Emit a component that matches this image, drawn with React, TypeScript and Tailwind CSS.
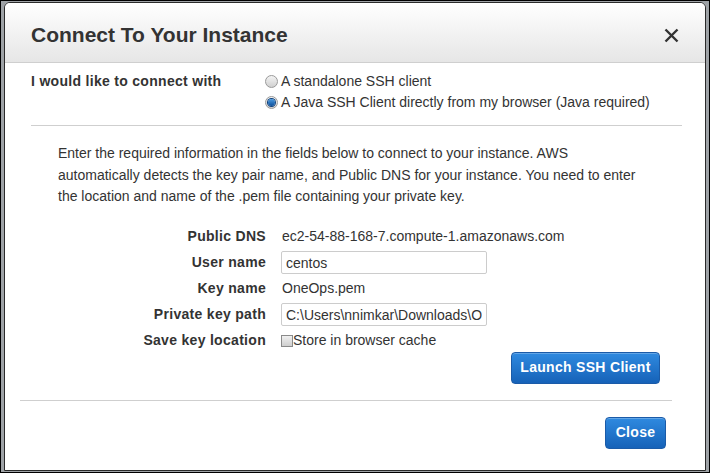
import React from 'react';

const font = { fontFamily: '"Liberation Sans", Arial, sans-serif' };

function Radio({ checked }: { checked?: boolean }) {
  return (
    <span className="relative inline-flex h-[13px] w-[13px] shrink-0 items-center justify-center rounded-full border border-[#9a9a9a] bg-gradient-to-b from-[#f4f4f4] to-[#d0d0d0]">
      {checked && <span className="h-[7px] w-[7px] rounded-full bg-gradient-to-b from-[#4a9be0] to-[#0a4f9c] ring-1 ring-[#0d3f7a]" />}
    </span>
  );
}

function Row({ label, children }: { label: string; children: React.ReactNode }) {
  return (
    <div className="flex h-[26px] items-center">
      <div className="w-[235px] shrink-0 text-right text-[14px] font-bold tracking-[0.3px] text-[#333]">{label}</div>
      <div className="ml-[16px] flex items-center text-[14px] text-[#333]">{children}</div>
    </div>
  );
}

function BlueButton({ children, className }: { children: React.ReactNode; className?: string }) {
  return (
    <button
      className={`h-[32px] rounded-[4px] border border-[#1b5ba8] bg-gradient-to-b from-[#2f8ae0] to-[#1662b8] text-[14px] font-bold tracking-[0.3px] text-white shadow-[inset_0_1px_0_rgba(255,255,255,0.25)] ${className ?? ''}`}
    >
      {children}
    </button>
  );
}

export default function App() {
  return (
    <div style={font} className="flex h-[473px] w-[710px] border border-black bg-[#9ea2a6] px-[3px] pt-[1px] pb-[1px]">
      <div className="flex flex-1 flex-col overflow-hidden rounded-t-[6px] border border-[#2a2a2a] bg-white">
        {/* header */}
        <div className="flex h-[60px] shrink-0 items-center justify-between border-b border-[#cfcfcf] bg-gradient-to-b from-white to-[#e6e6e6] pl-[26px] pr-[26px] pt-[4px]">
          <h2 className="text-[21px] font-bold text-[#333]">Connect To Your Instance</h2>
          <svg width="15" height="15" viewBox="0 0 15 15" className="mt-[2px]">
            <path d="M1.5 1.5 L13.5 13.5 M13.5 1.5 L1.5 13.5" stroke="#333" strokeWidth="2.4" />
          </svg>
        </div>

        {/* connect choice */}
        <div className="ml-[26px] mr-[23px] mt-[8px] flex">
          <div className="w-[234px] shrink-0 text-[14px] font-bold leading-[21px] tracking-[0.3px] text-[#333]">I would like to connect with</div>
          <div className="flex flex-col text-[14px] leading-[21px] text-[#333]">
            <label className="flex items-center gap-[3px]"><Radio /> A standalone SSH client</label>
            <label className="flex items-center gap-[3px]"><Radio checked /> A Java SSH Client directly from my browser (Java required)</label>
          </div>
        </div>
        <div className="ml-[26px] mr-[23px] mt-[12px] border-t border-[#cfcfcf]" />

        <p className="ml-[53px] mt-[17px] w-[588px] text-[14px] leading-[21.5px] text-[#333]">
          Enter the required information in the fields below to connect to your instance. AWS automatically detects the key pair name, and Public DNS for your instance. You need to enter the location and name of the .pem file containing your private key.
        </p>

        <div className="ml-[26px] mt-[16px] flex flex-col">
          <Row label="Public DNS">ec2-54-88-168-7.compute-1.amazonaws.com</Row>
          <Row label="User name">
            <input
              readOnly
              value="centos"
              className="-ml-px h-[23px] w-[206px] rounded-[2px] border border-[#cccccc] px-[4px] text-[14px] text-[#333] outline-none"
            />
          </Row>
          <Row label="Key name">OneOps.pem</Row>
          <Row label="Private key path">
            <input
              readOnly
              value="C:\Users\nnimkar\Downloads\OneOps.pem"
              className="-ml-px h-[23px] w-[206px] rounded-[2px] border border-[#cccccc] px-[4px] text-[14px] text-[#333] outline-none"
            />
          </Row>
          <Row label="Save key location">
            <span className="-ml-px flex items-center">
              <span className="h-[12px] w-[12px] border border-[#8a8a8a] bg-gradient-to-b from-[#f0f0f0] to-[#cfcfcf]" />
              Store in browser cache
            </span>
          </Row>
        </div>

        <div className="mr-[45px] mt-[-2px] flex justify-end">
          <BlueButton className="w-[149px]">Launch SSH Client</BlueButton>
        </div>

        <div className="ml-[15px] mr-[33px] mt-[16px] border-t border-[#cfcfcf]" />

        <div className="mr-[39px] mt-[16px] flex justify-end">
          <BlueButton className="w-[61px]">Close</BlueButton>
        </div>
      </div>
    </div>
  );
}
